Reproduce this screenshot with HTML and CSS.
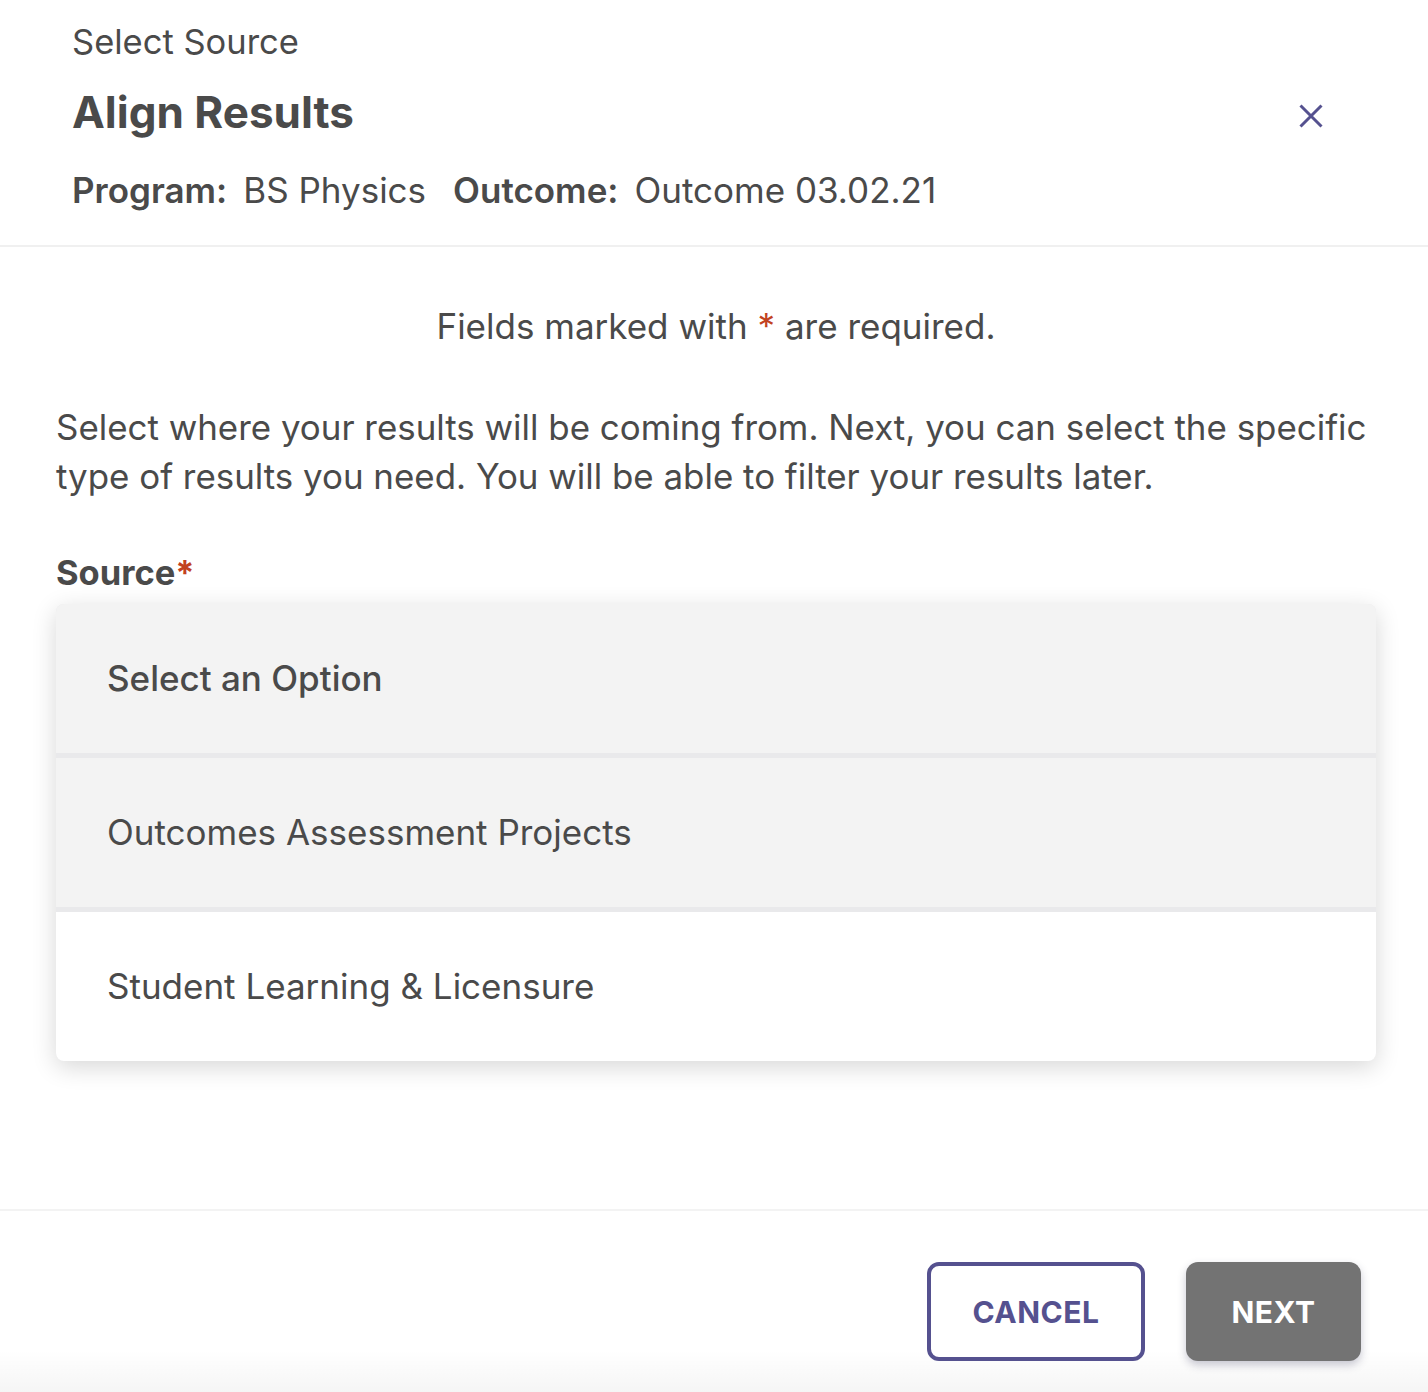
FILE: index.html
```html
<!DOCTYPE html>
<html lang="en">
  <head>
    <title>Align Results - Select Source</title>
    <meta name="viewport" content="width=device-width, initial-scale=1">
    <link rel="stylesheet" href="styles.css">
  </head>
  <body>
    <div class="modal">
      <header class="modal-header">
        <div class="heading">
          <p class="eyebrow">Select Source</p>
          <h1 class="title">Align Results</h1>
          <div class="meta">
            <span class="meta-item"><strong>Program:</strong><span>BS Physics</span></span>
            <span class="meta-item"><strong>Outcome:</strong><span>Outcome 03.02.21</span></span>
          </div>
        </div>
        <button class="close" aria-label="Close">
          <svg width="24" height="24" viewBox="0 0 24 24">
            <path d="M1.5 1.5 L22.5 22.5 M22.5 1.5 L1.5 22.5" stroke="#55518f" stroke-width="3" fill="none"/>
          </svg>
        </button>
      </header>

      <main class="modal-body">
        <p class="required-note">Fields marked with <span class="req">*</span> are required.</p>

        <p class="intro">
          Select where your results will be coming from. Next, you can select the specific
          type of results you need. You will be able to filter your results later.
        </p>

        <div class="field-label">Source<span class="req">*</span></div>

        <ul class="options">
          <li class="option placeholder">Select an Option</li>
          <li class="option hover">Outcomes Assessment Projects</li>
          <li class="option">Student Learning &amp; Licensure</li>
        </ul>
      </main>

      <footer class="modal-footer">
        <button class="btn btn-outline">Cancel</button>
        <button class="btn btn-disabled">Next</button>
      </footer>
    </div>
  </body>
</html>
```

FILE: styles.css
```css
body {
  margin: 0;
  background-color: #fff;
  color: #4a4a4a;
  font-family: "Inter", "Liberation Sans", sans-serif;
}
p {
  margin: 0;
}
.modal {
  min-height: 1392px;
  display: flex;
  flex-direction: column;
  background: linear-gradient(to bottom, rgba(255,255,255,0) 1350px, rgba(0,0,0,0.04) 1392px);
}
.modal-header {
  display: flex;
  justify-content: space-between;
  padding: 18px 93px 31px 72px;
  border-bottom: 2px solid #f0f0f0;
}
.eyebrow {
  font-size: 34.5px;
  line-height: 48px;
}
.title {
  margin: 18px 0 0;
  font-size: 44px;
  line-height: 56px;
  font-weight: 700;
}
.meta {
  margin-top: 26px;
  display: flex;
  gap: 27px;
  font-size: 35px;
  line-height: 48px;
}
.meta-item {
  display: flex;
  gap: 16px;
}
.meta strong {
  font-weight: 600;
}
.close {
  margin-top: 74px;
  width: 48px;
  height: 48px;
  padding: 0;
  border: 0;
  background: none;
  display: flex;
  align-items: center;
  justify-content: center;
}
.modal-body {
  flex: 1;
  padding: 55px 52px 0 56px;
}
.required-note {
  text-align: center;
  font-size: 35px;
  line-height: 48px;
}
.req {
  color: #c2421f;
}
.intro {
  margin-top: 53px;
  font-size: 34.9px;
  line-height: 49px;
}
.field-label {
  margin-top: 48px;
  font-size: 34.5px;
  line-height: 48px;
  font-weight: 700;
}
.options {
  list-style: none;
  margin: 7px 0 0;
  padding: 0;
  border-radius: 8px;
  background-color: #e9e9eb;
  box-shadow: 0 6px 24px rgba(0,0,0,0.16);
  display: flex;
  flex-direction: column;
  gap: 5px;
  overflow: hidden;
}
.option {
  height: 149px;
  display: flex;
  align-items: center;
  padding: 0 0 2px 51px;
  box-sizing: border-box;
  font-size: 35px;
  background-color: #fff;
}
.option.placeholder {
  background-color: #f3f3f3;
  font-weight: 500;
}
.option.hover {
  background-color: #f3f3f3;
}
.modal-footer {
  display: flex;
  justify-content: flex-end;
  gap: 41px;
  padding: 51px 67px 31px;
  border-top: 2px solid #f3f3f3;
}
.btn {
  height: 99px;
  border-radius: 12px;
  font-family: "Inter", "Liberation Sans", sans-serif;
  font-size: 30px;
  font-weight: 700;
  text-transform: uppercase;
  letter-spacing: 0.5px;
}
.btn-outline {
  width: 218px;
  border: 4px solid #55518f;
  background-color: #fff;
  color: #55518f;
}
.btn-disabled {
  width: 175px;
  border: 0;
  background-color: #737373;
  color: #fff;
  box-shadow: 0 4px 8px rgba(40,40,80,0.25);
}
```
